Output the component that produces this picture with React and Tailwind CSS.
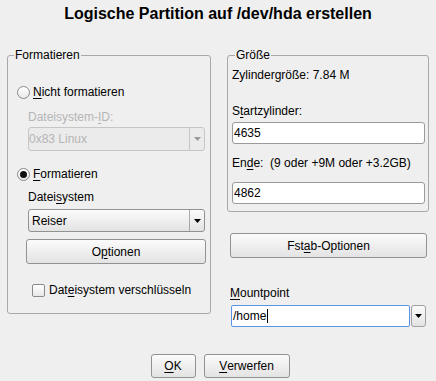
import React from "react";

const U = ({ children }) => (
  <span className="underline underline-offset-[2px] decoration-[1px]">{children}</span>
);

function Arrow({ color = "#000" }) {
  return (
    <svg width="7" height="4" viewBox="0 0 7 4">
      <path d="M0 0H7L3.5 4Z" fill={color} />
    </svg>
  );
}

function Radio({ checked }) {
  return (
    <div className="w-[13px] h-[13px] rounded-full border border-[#8a8a8a] bg-linear-to-b from-[#ffffff] to-[#e8e8e8] flex items-center justify-center shrink-0">
      {checked && <div className="w-[7px] h-[7px] rounded-full bg-[#111]" />}
    </div>
  );
}

const btn =
  "border border-[#929292] rounded-[3px] bg-linear-to-b from-[#fbfbfb] to-[#e3e3e3] flex items-center justify-center leading-[14px]";

export default function App() {
  return (
    <div className="w-[436px] h-[381px] bg-[#efefef] text-black text-[12px] leading-[14px] font-['Liberation_Sans',Arial,sans-serif] flex flex-col overflow-hidden">
      <div className="pt-[3px] h-[24px] text-center text-[16px] leading-[21px] font-bold">
        Logische Partition auf /dev/hda erstellen
      </div>

      <div className="mt-[24px] flex items-start pl-[7px] gap-[16px]">
        {/* Left group */}
        <fieldset className="w-[204px] h-[266px] border border-[#a8a8a8] rounded-[3px] m-0 p-0 shrink-0">
          <legend className="ml-[6px] px-[1px] leading-[14px]">Formatieren</legend>
          <div className="flex flex-col">
            <div className="mt-[24px] pl-[9px] flex items-center gap-[3px] h-[13px]">
              <Radio />
              <span className="leading-[13px]">
                <U>N</U>icht formatieren
              </span>
            </div>
            <div className="mt-[11px] pl-[20px] text-[#b5b5b5]">
              Dateisystem-<U>I</U>D:
            </div>
            <div className="mt-[3px] ml-[20px] w-[177px] h-[24px] border border-[#c6c6c6] rounded-[3px] bg-[#ebebeb] flex text-[#b5b5b5]">
              <div className="flex-1 flex items-center">0x83 Linux</div>
              <div className="w-[15px] border-l border-[#c6c6c6] flex items-center justify-center">
                <Arrow color="#9a9a9a" />
              </div>
            </div>
            <div className="mt-[17px] pl-[9px] flex items-center gap-[3px] h-[13px]">
              <Radio checked />
              <span className="leading-[13px]">
                <U>F</U>ormatieren
              </span>
            </div>
            <div className="mt-[9px] pl-[20px]">
              Datei<U>s</U>ystem
            </div>
            <div className="mt-[5px] ml-[20px] w-[177px] h-[23px] border border-[#929292] rounded-[3px] bg-linear-to-b from-[#fbfbfb] to-[#e3e3e3] flex">
              <div className="flex-1 flex items-center pl-[3px]">Reiser</div>
              <div className="w-[15px] border-l border-[#a8a8a8] flex items-center justify-center">
                <Arrow />
              </div>
            </div>
            <div className={`mt-[7px] ml-[18px] w-[180px] h-[25px] ${btn}`}>
              O<U>p</U>tionen
            </div>
            <div className="mt-[20px] pl-[24px] flex items-center gap-[4px] h-[13px]">
              <div className="w-[13px] h-[13px] rounded-[2px] border border-[#8a8a8a] bg-linear-to-b from-[#ffffff] to-[#e8e8e8] shrink-0" />
              <span className="leading-[13px]">
                Dat<U>e</U>isystem verschlüsseln
              </span>
            </div>
          </div>
        </fieldset>

        {/* Right column */}
        <div className="w-[202px] flex flex-col shrink-0">
          <fieldset className="w-[202px] h-[164px] border border-[#a8a8a8] rounded-[3px] m-0 p-0">
            <legend className="ml-[7px] px-[1px] leading-[14px]">Größe</legend>
            <div className="flex flex-col pl-[4px]">
              <div className="mt-[6px]">Zylindergröße: 7.84 M</div>
              <div className="mt-[22px]">
                S<U>t</U>artzylinder:
              </div>
              <div className="mt-[4px] w-[193px] h-[22px] border border-[#9a9a9a] rounded-[3px] bg-white flex items-center pl-[1px]">
                4635
              </div>
              <div className="mt-[12px] whitespace-pre">
                En<U>d</U>e:  (9 oder +9M oder +3.2GB)
              </div>
              <div className="mt-[12px] w-[193px] h-[22px] border border-[#9a9a9a] rounded-[3px] bg-white flex items-center pl-[1px]">
                4862
              </div>
            </div>
          </fieldset>
          <div className={`mt-[21px] ml-[3px] w-[197px] h-[25px] ${btn}`}>
            Fst<U>a</U>b-Optionen
          </div>
          <div className="mt-[28px] ml-[3px]">
            <U>M</U>ountpoint
          </div>
          <div className="mt-[5px] ml-[4px] w-[195px] h-[22px] flex gap-[1px]">
            <div className="w-[179px] h-[22px] border border-[#5a93e4] rounded-[2px] bg-white flex items-center pl-[1px]">
              <span>/home</span>
              <span className="w-[1px] h-[14px] bg-black ml-[1px]" />
            </div>
            <div className="w-[15px] h-[22px] border border-[#a0a0a0] rounded-[3px] bg-linear-to-b from-[#fbfbfb] to-[#e3e3e3] flex items-center justify-center">
              <Arrow />
            </div>
          </div>
        </div>
      </div>

      <div className="mt-[27px] flex justify-center gap-[8px] pl-[4px]">
        <div className={`w-[45px] h-[24px] ${btn}`}>
          <U>O</U>K
        </div>
        <div className={`w-[86px] h-[24px] ${btn}`}>
          <U>V</U>erwerfen
        </div>
      </div>
    </div>
  );
}
